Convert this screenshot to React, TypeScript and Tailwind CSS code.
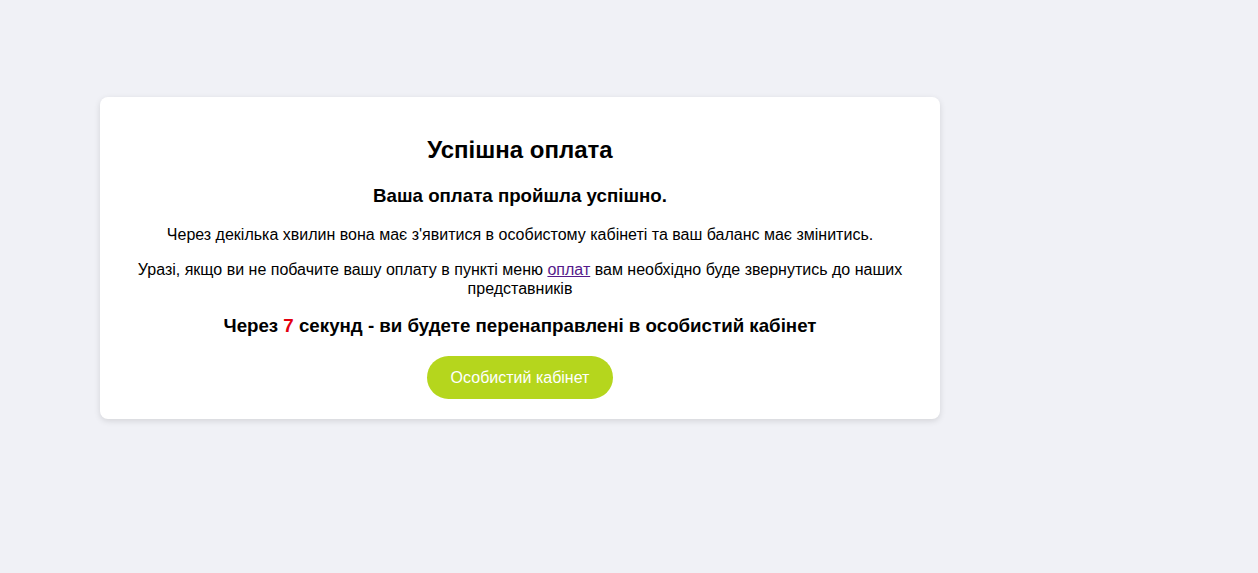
import React from "react";

export default function App() {
  const seconds = 7;

  return (
    <div className="min-h-[573px] w-full bg-[#f0f1f6] pt-[97px] pl-[100px] font-['Liberation_Sans',Arial,sans-serif] text-black">
      <div className="w-[840px] rounded-lg bg-white px-5 pt-[39px] pb-5 text-center shadow-[0_2px_6px_rgba(0,0,0,0.12)]">
        <h1 className="text-[24px] font-bold leading-[28px]">Успішна оплата</h1>
        <h2 className="mt-[21px] text-[18.72px] font-bold leading-[22px]">Ваша оплата пройшла успішно.</h2>
        <p className="mt-[19px] text-[16px] leading-[18px]">
          Через декілька хвилин вона має з'явитися в особистому кабінеті та ваш баланс має змінитись.
        </p>
        <p className="mt-[16px] text-[16px] leading-[19px]">
          Уразі, якщо ви не побачите вашу оплату в пункті меню{" "}
          <a href="#" className="text-[#551a8b] underline">
            оплат
          </a>{" "}
          вам необхідно буде звернутись до наших представників
        </p>
        <p className="mt-[17px] text-[18.72px] font-bold leading-[22px]">
          Через <span className="text-[#e3000f]">{seconds}</span> секунд - ви будете перенаправлені в особистий кабінет
        </p>
        <div className="mt-[19px] flex justify-center">
          <button className="h-[43px] rounded-full bg-[#b5d61d] px-6 text-[16px] leading-[18px] text-white">
            Особистий кабінет
          </button>
        </div>
      </div>
    </div>
  );
}
